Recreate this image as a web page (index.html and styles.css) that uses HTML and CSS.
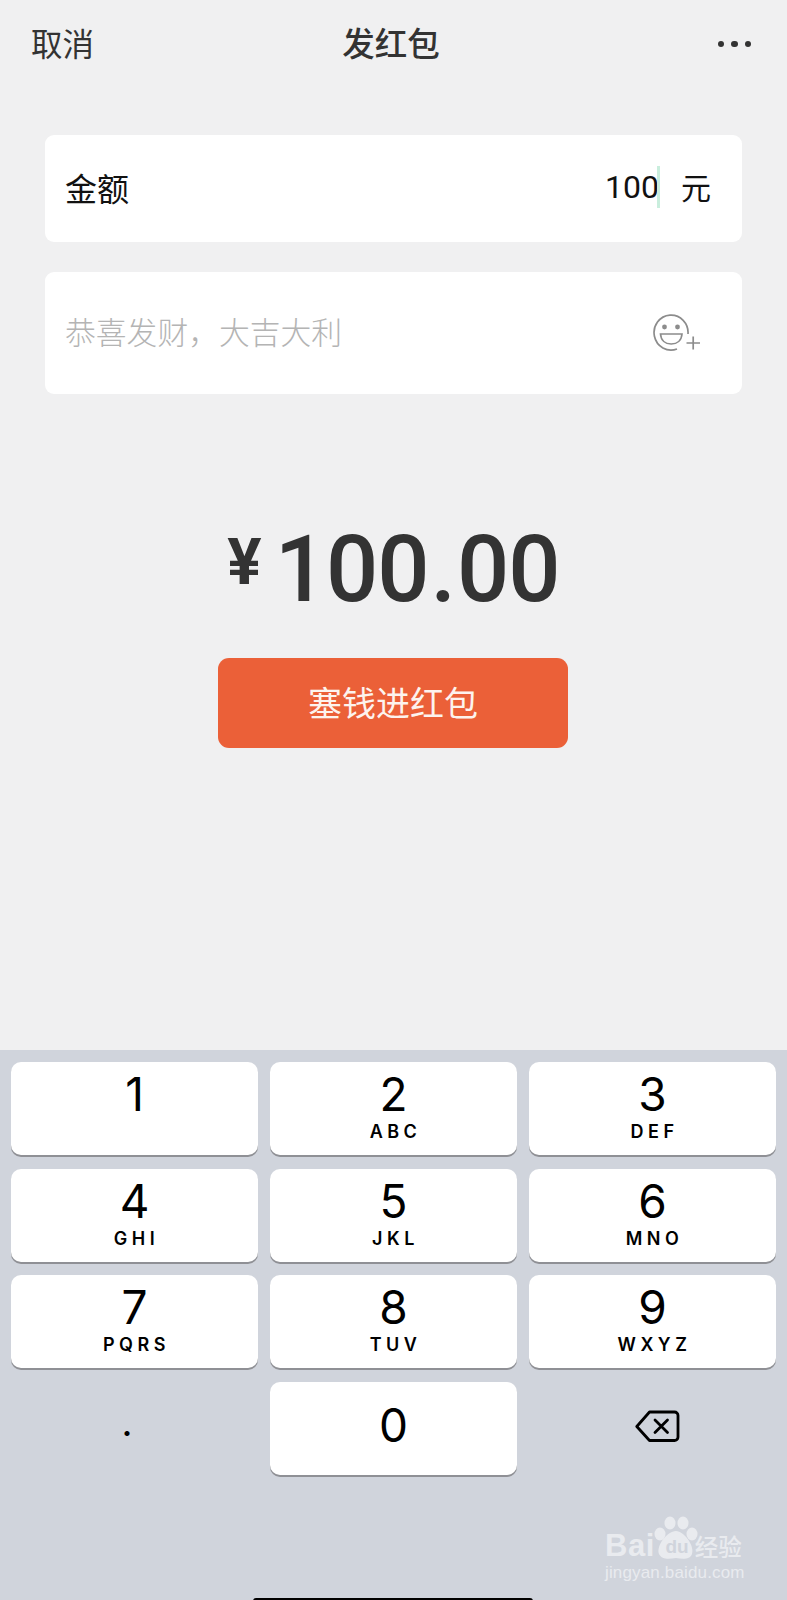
FILE: index.html
```html
<!DOCTYPE html>
<html lang="zh">
<head>
<meta charset="utf-8">
<title>发红包</title>
<link rel="stylesheet" href="styles.css">
</head>
<body>
<div class="page">
  <header class="nav">
    <span class="nav-cancel">取消</span>
    <span class="nav-title">发红包</span>
    <span class="nav-more"><i></i><i></i><i></i></span>
  </header>
  <section class="card card-amount">
    <span class="label">金额</span>
    <span class="amount-input"><span class="amount-value">100</span><span class="caret"></span><span class="unit">元</span></span>
  </section>
  <section class="card card-message">
    <span class="placeholder">恭喜发财，大吉大利</span>
    <svg class="emoji" width="48" height="38" viewBox="0 0 48 38" fill="none" stroke="#8c8c8c" stroke-width="1.7">
      <path d="M35 20A17 17.5 0 1 0 24 35"/>
      <circle cx="11.5" cy="13" r="2.4" fill="#8c8c8c" stroke="none"/>
      <circle cx="24.5" cy="13" r="2.4" fill="#8c8c8c" stroke="none"/>
      <path d="M7.5 20H29C28.5 26.5 24 30 18.2 30S8 26.5 7.5 20Z"/>
      <path d="M33.5 29H47M40.2 22.5V35.5"/>
    </svg>
  </section>
  <div class="total"><span class="total-sign">¥</span><span class="total-num">100<span class="total-dot">.</span>00</span></div>
  <button class="submit">塞钱进红包</button>
  <section class="keyboard">
    <div class="keys">
      <div class="key"><span class="digit">1</span></div>
      <div class="key"><span class="digit">2</span><span class="letters">ABC</span></div>
      <div class="key"><span class="digit">3</span><span class="letters">DEF</span></div>
      <div class="key"><span class="digit">4</span><span class="letters">GHI</span></div>
      <div class="key"><span class="digit">5</span><span class="letters">JKL</span></div>
      <div class="key"><span class="digit">6</span><span class="letters">MNO</span></div>
      <div class="key"><span class="digit">7</span><span class="letters">PQRS</span></div>
      <div class="key"><span class="digit">8</span><span class="letters">TUV</span></div>
      <div class="key"><span class="digit">9</span><span class="letters">WXYZ</span></div>
      <div class="key key-plain key-dot"><span class="dot-char">.</span></div>
      <div class="key"><span class="digit digit-zero">0</span></div>
      <div class="key key-plain key-del">
        <svg width="45" height="33" viewBox="0 0 45 33" fill="none" stroke="#000" stroke-width="2.8" stroke-linejoin="round" stroke-linecap="round">
          <path d="M14.5 2H39.5a3.5 3.5 0 0 1 3.5 3.5v21.5a3.5 3.5 0 0 1-3.5 3.5H14.5L1.8 16.5Z"/>
          <path d="M20 10L32.5 22.5M32.5 10L20 22.5"/>
        </svg>
      </div>
    </div>
    <div class="home-bar"></div>
    <div class="watermark">
      <div class="wm-top">
        <span class="wm-bai">Bai</span>
        <svg class="wm-paw" width="44" height="44" viewBox="0 0 44 44" fill="#e9ebef">
          <ellipse cx="16" cy="7" rx="5.5" ry="6.5"/>
          <ellipse cx="29" cy="7" rx="5.5" ry="6.5"/>
          <ellipse cx="6" cy="18" rx="5.5" ry="6.5"/>
          <ellipse cx="38" cy="18" rx="5.5" ry="6.5"/>
          <path d="M22 15C30 15 41 30 38 38C36 44 28 43 22 42C15 43 8 44 5 38C2 30 13 15 22 15Z"/>
          <text x="23" y="37" text-anchor="middle" class="wm-du">du</text>
        </svg>
        <span class="wm-jy">经验</span>
      </div>
      <div class="wm-url">jingyan.baidu.com</div>
    </div>
  </section>
</div>
</body>
</html>
```

FILE: styles.css
```css
* { box-sizing: border-box; }
html, body { margin: 0; padding: 0; }
body { font-family: "Noto Sans CJK SC", "Liberation Sans", sans-serif; background: #f0f0f1; }
.page { position: relative; width: 787px; height: 1600px; display: flex; flex-direction: column; overflow: hidden; }

.nav { height: 88px; padding: 0 36px 4px 31px; display: grid; grid-template-columns: 1fr auto 1fr; align-items: center; color: #333; }
.nav-cancel { font-size: 31.5px; line-height: 40px; }
.nav-title { font-size: 32.5px; line-height: 40px; font-weight: 500; }
.nav-more { justify-self: end; display: flex; gap: 7px; margin-top: 4px; }
.nav-more i { width: 6.5px; height: 6.5px; border-radius: 50%; background: #333; }

.card { margin: 0 45px; background: #fff; border-radius: 9px; display: flex; align-items: center; justify-content: space-between; }
.card-amount { margin-top: 47px; height: 107px; padding: 0 31px 0 20px; color: #111; }
.card-message { margin-top: 30px; height: 122px; padding: 0 41px 0 20px; }
.label { font-size: 32px; line-height: 40px; margin-bottom: 4px; }
.amount-input { display: flex; align-items: center; margin-bottom: 4px; }
.amount-value { font-family: "Roboto", sans-serif; font-size: 32px; line-height: 40px; font-weight: 400; }
.caret { width: 3px; height: 42px; background: #c9eedd; margin: 0 21px 0 -2px; }
.unit { font-size: 30px; line-height: 40px; margin-bottom: 1px; }
.placeholder { font-size: 30.8px; line-height: 40px; color: #b4b4b4; font-weight: 300; margin-bottom: 4px; }
.emoji { display: block; }

.total { margin-top: 131px; height: 90px; display: flex; justify-content: center; color: #333; font-family: "Roboto", sans-serif; font-weight: 500; }
.total-sign { font-size: 64px; line-height: 76px; font-weight: 700; margin-right: 13px; }
.total-num { font-size: 92px; line-height: 90px; letter-spacing: -1px; }
.total-dot { margin: 0 2px; }

.submit { margin: 43px 0 0 218px; width: 350px; height: 90px; padding: 0 0 4px; border: 0; border-radius: 11px; background: #eb6038; color: #fdf3ee; font-family: inherit; font-size: 34px; font-weight: 400; }

.keyboard { margin-top: auto; position: relative; height: 550px; background: #d0d4dc; }
.keys { padding: 12px 11px 0; display: grid; grid-template-columns: repeat(3, 247px); grid-auto-rows: 93px; column-gap: 12px; row-gap: 13.5px; }
.key { background: #fff; border-radius: 10px; box-shadow: 0 2px 0 #8f9095; display: flex; flex-direction: column; align-items: center; color: #000; font-family: "Inter", sans-serif; }
.digit { font-size: 46px; line-height: 46px; margin-top: 9px; font-weight: 380; }
.digit-zero { margin-top: 20px; }
.letters { font-size: 18px; line-height: 22px; margin-top: 4px; font-weight: 600; letter-spacing: 4.5px; margin-right: -4px; }
.key-plain { background: transparent; box-shadow: none; }
.key-dot { padding: 28px 15px 0 0; }
.dot-char { font-size: 30px; line-height: 30px; font-weight: 700; }
.key-del { padding-top: 28px; padding-left: 9px; }

.home-bar { position: absolute; left: 253px; top: 548px; width: 280px; height: 6px; background: #000; border-radius: 3px; }

.watermark { position: absolute; left: 605px; top: 466px; width: 140px; color: #e9ebef; }
.wm-top { display: flex; align-items: flex-end; height: 44px; }
.wm-bai { font-family: "Liberation Sans", sans-serif; font-weight: 700; font-size: 31px; line-height: 28px; letter-spacing: 0.5px; }
.wm-paw { display: block; margin-left: -1px; flex: none; }
.wm-du { font-family: "Liberation Sans", sans-serif; font-size: 19px; font-weight: 700; fill: #d0d4dc; }
.wm-jy { font-size: 23.5px; line-height: 28px; font-weight: 500; flex: none; margin-left: -3px; }
.wm-url { font-family: "Liberation Sans", sans-serif; font-size: 17px; line-height: 20px; margin-top: 3px; letter-spacing: 0.15px; white-space: nowrap; }
```
